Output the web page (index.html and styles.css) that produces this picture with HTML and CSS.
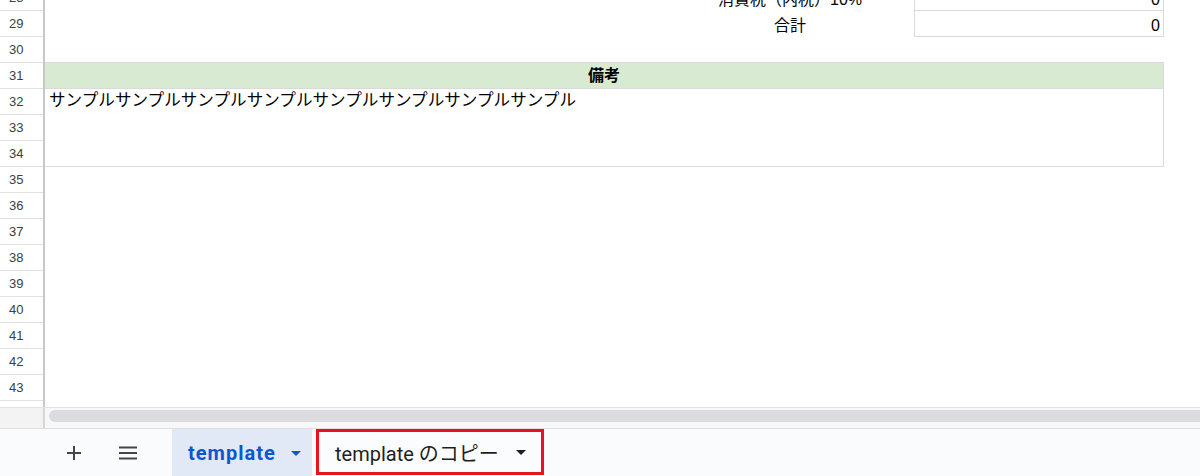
FILE: index.html
```html
<!DOCTYPE html>
<html lang="ja">
  <head>
    <meta charset="UTF-8" />
    <meta name="viewport" content="width=device-width, initial-scale=1.0" />
    <title>template のコピー</title>
    <link rel="stylesheet" href="styles.css">
  </head>
  <body>
    <div class="viewport">
      <div class="sheet">
        <div class="heads">
          <div class="head">28</div>
          <div class="head">29</div>
          <div class="head">30</div>
          <div class="head">31</div>
          <div class="head">32</div>
          <div class="head">33</div>
          <div class="head">34</div>
          <div class="head">35</div>
          <div class="head">36</div>
          <div class="head">37</div>
          <div class="head">38</div>
          <div class="head">39</div>
          <div class="head">40</div>
          <div class="head">41</div>
          <div class="head">42</div>
          <div class="head">43</div>
          <div class="head"></div>
        </div>

        <div class="cells">
          <div class="sum-row">
            <div class="sum-label">消費税（内税）10%</div>
            <div class="sum-value">0</div>
          </div>
          <div class="sum-row">
            <div class="sum-label">合計</div>
            <div class="sum-value">0</div>
          </div>
          <div class="blank-row"></div>

          <div class="memo">
            <div class="memo-head">備考</div>
            <div class="memo-body">サンプルサンプルサンプルサンプルサンプルサンプルサンプルサンプル</div>
          </div>
        </div>
      </div>
    </div>

    <div class="scroll">
      <div class="scroll-corner"></div>
      <div class="scroll-track">
        <div class="scroll-thumb"></div>
      </div>
    </div>

    <div class="tabbar">
      <button class="icon-btn" title="シートを追加">
        <svg width="16" height="16" viewBox="0 0 16 16">
          <path d="M8 1v14M1 8h14" stroke="#444746" stroke-width="2" fill="none" />
        </svg>
      </button>
      <button class="icon-btn" title="すべてのシート">
        <svg width="20" height="14" viewBox="0 0 20 14">
          <path d="M1 1.5h18M1 7h18M1 12.5h18" stroke="#444746" stroke-width="2" fill="none" />
        </svg>
      </button>

      <div class="tab active">
        <span>template</span>
        <span class="caret"></span>
      </div>
      <div class="tab marked">
        <span>template のコピー</span>
        <span class="caret"></span>
      </div>
    </div>
  </body>
</html>
```

FILE: styles.css
```css
body {
  margin: 0;
  font-family: "Liberation Sans", "Noto Sans CJK JP", sans-serif;
  background-color: #fff;
  height: 476px;
  overflow: hidden;
}

.viewport {
  height: 407px;
  overflow: hidden;
}

.sheet {
  display: flex;
  margin-top: -15px;
}

/* row numbers */
.heads {
  width: 43px;
  flex-shrink: 0;
  border-right: 2px solid #c7c7c7;
}

.head {
  box-sizing: border-box;
  height: 26px;
  border-bottom: 1px solid #e1e1e1;
  padding-left: 9px;
  font-size: 13px;
  line-height: 25px;
  color: #3c4043;
}

.cells {
  flex: 1;
  font-size: 16px;
  color: #000;
}

/* sheets puts cell text at the bottom */
.sum-row {
  display: grid;
  grid-template-columns: 244px 250px;
  padding-left: 625px;
  height: 26px;
}

.sum-label {
  text-align: center;
  padding: 5px 4px 0 0;
  line-height: 20px;
}

.sum-value {
  box-sizing: border-box;
  border-left: 1px solid #dadada;
  border-right: 1px solid #dadada;
  border-bottom: 1px solid #dadada;
  text-align: right;
  padding: 5px 3px 0 0;
  line-height: 20px;
}

.blank-row {
  height: 25px;
}

.memo {
  width: 1118px;
  border-top: 1px solid #dadada;
  border-right: 1px solid #dadada;
  border-bottom: 1px solid #dadada;
}

.memo-head {
  height: 25px;
  background-color: #d9ead3;
  border-bottom: 1px solid #dadada;
  text-align: center;
  font-weight: bold;
  line-height: 25px;
}

.memo-body {
  height: 77px;
  padding: 1px 0 0 4px;
  box-sizing: border-box;
  font-size: 16.6px;
  line-height: 22px;
}

/* horizontal scrollbar */
.scroll {
  display: flex;
  height: 20px;
  border-top: 1px solid #e3e3e3;
  border-bottom: 1px solid #dedede;
}

.scroll-corner {
  width: 43px;
  border-right: 2px solid #d6d6d6;
  background-color: #f3f3f3;
}

.scroll-track {
  flex: 1;
  background-color: #f8f8f8;
  padding: 2px 0 0 4px;
}

.scroll-thumb {
  height: 12px;
  background-color: #dadce0;
  border-radius: 6px 0 0 6px;
}

/* sheet tabs */
.tabbar {
  display: flex;
  align-items: stretch;
  height: 48px;
  background-color: #f9fbfd;
  padding-left: 56px;
}

.icon-btn {
  width: 36px;
  border: none;
  background: none;
  padding: 0;
  margin-right: 18px;
  display: flex;
  align-items: center;
  justify-content: center;
  cursor: pointer;
}

.tab {
  display: flex;
  align-items: center;
  font-family: Roboto, "Noto Sans CJK JP", sans-serif;
  font-size: 20px;
  color: #1f1f1f;
  cursor: pointer;
}

.tab.active {
  width: 140px;
  box-sizing: border-box;
  padding-left: 16px;
  background-color: #e1e9f7;
  color: #0b57d0;
  font-weight: bold;
  letter-spacing: 1px;
  margin-left: 8px;
}

.tab.marked {
  width: 228px;
  box-sizing: border-box;
  height: 46px;
  margin-left: 4px;
  padding-left: 16px;
  border: 3px solid #e8141b;
  background-color: #fbfcfe;
}

.caret {
  width: 0;
  height: 0;
  border-left: 5px solid transparent;
  border-right: 5px solid transparent;
  border-top: 5px solid currentColor;
  margin-left: 17px;
  margin-top: 1px;
}

.tab.active .caret {
  margin-left: 15px;
}
```
